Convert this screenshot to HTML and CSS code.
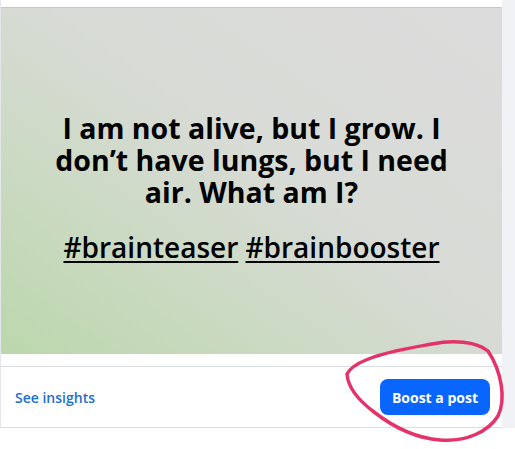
FILE: index.html
```html
<!DOCTYPE html>
<html lang="en">
<head>
    <meta charset="UTF-8">
    <meta name="viewport" content="width=device-width, initial-scale=1.0">
    <title>Post preview</title>
    <link rel="stylesheet" href="styles.css">
</head>
<body>

<div class="page">
    <div class="card">
        <div class="card-top"></div>
        <div class="post-image">
            <div class="post-text">
                <p class="riddle">I am not alive, but I grow. I don’t have lungs, but I need air. What am I?</p>
                <p class="tags"><a href="#">#brainteaser</a> <a href="#">#brainbooster</a></p>
            </div>
        </div>
        <div class="card-gap"></div>
        <div class="card-footer">
            <a href="#" class="insights">See insights</a>
            <button class="boost">Boost a post</button>
        </div>
    </div>
    <div class="side"></div>

    <!-- marca dibujada a mano alrededor del botón -->
    <svg class="scribble" width="515" height="449" viewBox="0 0 515 449">
        <path d="M488 351 C476 341 452 340 432 344 C410 348 384 352 366 360 C356 364 350 368 347 374 C348 388 358 400 374 412 C392 426 414 438 440 440 C466 442 488 432 498 416 C506 400 502 372 488 351"
              fill="none" stroke="#e4336a" stroke-width="3.5" stroke-linecap="round" stroke-linejoin="round"/>
    </svg>
</div>

</body>
</html>
```

FILE: styles.css
```css
body {
    margin: 0;
    background-color: #fff;
    font-family: "Open Sans", "Noto Sans", sans-serif;
}

.page {
    position: relative;
    display: flex;
    width: 515px;
    height: 449px;
    align-items: flex-start;
}

.card {
    width: 501px;
    border-left: 1px solid #e4e6eb;
    background-color: #fff;
}

.card-top {
    height: 7px;
    border-bottom: 1px solid #c8c8c8;
}

.post-image {
    height: 346px;
    display: flex;
    align-items: center;
    justify-content: center;
    background: linear-gradient(35deg, #bbd7ac 0%, #ccdac4 30%, #d8dbd6 55%, #dcdcdc 100%);
}

.post-text {
    width: 420px;
    text-align: center;
    color: #000;
    font-weight: 700;
    font-size: 28.5px;
    margin-top: 14px;
}

.riddle {
    margin: 0;
    line-height: 32px;
}

.tags {
    margin: 22px 0 0;
    font-weight: 600;
    font-size: 28px;
    line-height: 34px;
}

.tags a {
    color: #000;
    text-decoration: underline;
    text-decoration-thickness: 2px;
    text-underline-offset: 3px;
}

.card-gap {
    height: 12px;
    border-bottom: 1px solid #dadde1;
}

.card-footer {
    height: 60px;
    display: flex;
    align-items: center;
    justify-content: space-between;
    padding: 0 12px 0 14px;
    border-bottom: 1px solid #dadde1;
}

.insights {
    color: #1b6fd1;
    font-size: 14px;
    font-weight: 600;
    text-decoration: none;
}

.boost {
    height: 36px;
    padding: 0 12px;
    border: none;
    border-radius: 8px;
    background-color: #0866ff;
    color: #fff;
    font-family: "Open Sans", "Noto Sans", sans-serif;
    font-size: 14px;
    font-weight: 700;
    cursor: pointer;
}

.side {
    width: 13px;
    height: 428px;
    background-color: #f0f2f5;
}

.scribble {
    position: absolute;
    left: 0;
    top: 0;
    pointer-events: none;
}
```
